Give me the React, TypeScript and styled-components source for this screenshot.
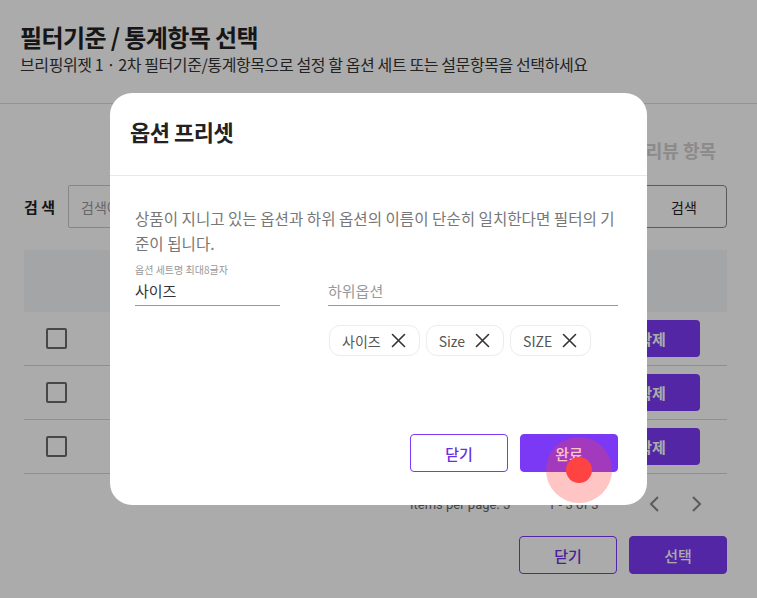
import React from 'react';
import styled, { createGlobalStyle } from 'styled-components';

const purple = '#7b39f5';

const GlobalStyle = createGlobalStyle`
    html, body {
        margin: 0;
        padding: 0;
        background: #ffffff;
    }
    body {
        font-family: 'Noto Sans CJK KR', 'Noto Sans', sans-serif;
        color: #222;
    }
    * {
        box-sizing: border-box;
    }
`;

const Page = styled.div`
    position: relative;
    width: 757px;
    height: 598px;
    overflow: hidden;
    background: #ffffff;
`;

const Header = styled.div`
    padding: 22px 20px 27px;
    border-bottom: 1px solid #dcdcdc;
`;

const Title = styled.h1`
    margin: 0;
    font-size: 24px;
    line-height: 30px;
    font-weight: 700;
    letter-spacing: -0.6px;
    color: #222;
`;

const SubTitle = styled.p`
    margin: 0;
    font-size: 16px;
    line-height: 24px;
    letter-spacing: -0.4px;
    color: #333;
`;

const Tabs = styled.div`
    display: flex;
    justify-content: flex-end;
    gap: 24px;
    padding: 34px 41px 0 24px;
`;

const Tab = styled.span<{ $active?: boolean }>`
    font-size: 18px;
    line-height: 24px;
    font-weight: 700;
    color: ${({ $active }) => ($active ? purple : '#cfcfcf')};
`;

const SearchRow = styled.div`
    display: flex;
    align-items: center;
    margin: 23px 30px 0 24px;
    height: 43px;
`;

const SearchLabel = styled.span`
    width: 44px;
    font-size: 15px;
    font-weight: 700;
    color: #222;
`;

const SearchInput = styled.div`
    flex: 1;
    height: 43px;
    display: flex;
    align-items: center;
    padding: 0 12px;
    border: 1px solid #c8c8c8;
    border-radius: 2px;
    font-size: 14px;
    color: #999;
`;

const SearchButton = styled.button`
    width: 86px;
    height: 43px;
    margin-left: 8px;
    border: 1px solid #888;
    border-radius: 4px;
    background: #fff;
    font-family: inherit;
    font-size: 14px;
    color: #222;
`;

const Table = styled.div`
    margin: 22px 30px 0 24px;
`;

const TableHead = styled.div`
    height: 62px;
    background: #f3f6f8;
`;

const Row = styled.div`
    height: 54px;
    display: flex;
    align-items: center;
    justify-content: space-between;
    padding: 0 27px 0 22px;
    border-bottom: 1px solid #d6d6d6;
`;

const CheckBox = styled.span`
    width: 21px;
    height: 21px;
    border: 2px solid #6a6a6a;
    border-radius: 2px;
`;

const DeleteButton = styled.button`
    width: 96px;
    height: 37px;
    border: none;
    border-radius: 4px;
    background: ${purple};
    color: #fff;
    font-family: inherit;
    font-size: 15px;
    font-weight: 700;
`;

const Pagination = styled.div`
    height: 60px;
    display: flex;
    align-items: center;
    padding-left: 410px;
    font-family: Roboto, 'Noto Sans', sans-serif;
    font-size: 13px;
    color: #666;
`;

const PageInfo = styled.span<{ $gap: number }>`
    margin-right: ${({ $gap }) => $gap}px;
`;

const Chevron = styled.span`
    display: flex;
    width: 20px;
    justify-content: center;
    margin-right: 23px;
    color: #888;
`;

const Footer = styled.div`
    display: flex;
    justify-content: flex-end;
    gap: 12px;
    padding: 2px 30px 0 0;
`;

const ActionButton = styled.button<{ $filled?: boolean }>`
    width: 98px;
    height: 38px;
    border-radius: 4px;
    border: 1px solid ${purple};
    background: ${({ $filled }) => ($filled ? purple : '#fff')};
    color: ${({ $filled }) => ($filled ? '#fff' : '#6a30e0')};
    font-family: inherit;
    font-size: 15px;
    font-weight: 500;
`;

const Overlay = styled.div`
    position: absolute;
    inset: 0;
    background: rgba(0, 0, 0, 0.33);
    display: flex;
    align-items: center;
    justify-content: center;
`;

const Modal = styled.div`
    width: 537px;
    height: 412px;
    display: flex;
    flex-direction: column;
    background: #fff;
    border-radius: 22px;
    overflow: hidden;
`;

const ModalHeader = styled.div`
    height: 83px;
    padding: 23px 20px 0;
    border-bottom: 1px solid #e8e8e8;
`;

const ModalTitle = styled.h2`
    margin: 0;
    font-size: 22px;
    line-height: 30px;
    font-weight: 700;
    letter-spacing: -0.5px;
    color: #222;
`;

const ModalBody = styled.div`
    flex: 1;
    padding: 30px 29px 0 25px;
`;

const Description = styled.p`
    margin: 0;
    font-size: 15.6px;
    line-height: 25px;
    word-break: break-all;
    color: #777;
`;

const Fields = styled.div`
    display: grid;
    grid-template-columns: 145px 290px;
    column-gap: 48px;
    margin-top: 7px;
`;

const FieldLabel = styled.div`
    height: 14px;
    font-size: 10px;
    line-height: 14px;
    color: #999;
`;

const FieldInput = styled.div<{ $placeholder?: boolean }>`
    padding: 3px 0 3px;
    line-height: 22px;
    font-size: 15px;
    border-bottom: 1px solid #999;
    color: ${({ $placeholder }) => ($placeholder ? '#999' : '#333')};
`;

const Chips = styled.div`
    display: flex;
    gap: 6px;
    margin-top: 19px;
    padding-left: 1px;
`;

const Chip = styled.span`
    display: inline-flex;
    align-items: center;
    gap: 10px;
    height: 31px;
    padding: 0 13px 0 12px;
    border: 1px solid #ececec;
    border-radius: 11px;
    font-size: 14px;
    color: #555;
`;

const ModalFooter = styled.div`
    display: flex;
    justify-content: flex-end;
    gap: 12px;
    padding: 0 29px 33px 0;
`;

const TouchHalo = styled.span`
    position: absolute;
    left: 546px;
    top: 437px;
    width: 66px;
    height: 66px;
    border-radius: 50%;
    background: rgba(255, 60, 60, 0.3);
    display: flex;
    align-items: center;
    justify-content: center;
`;

const TouchDot = styled.span`
    width: 26px;
    height: 26px;
    border-radius: 50%;
    background: #ff4242;
`;

const CloseIcon = () => (
    <svg width="15" height="15" viewBox="0 0 15 15" fill="none" stroke="#333" strokeWidth="1.6" strokeLinecap="round">
        <path d="M1.5 1.5 L13.5 13.5 M13.5 1.5 L1.5 13.5" />
    </svg>
);

const ChevronIcon = ({ dir }: { dir: 'left' | 'right' }) => (
    <svg width="12" height="18" viewBox="0 0 12 18" fill="none" stroke="currentColor" strokeWidth="2">
        <path d={dir === 'left' ? 'M10 2 L3 9 L10 16' : 'M2 2 L9 9 L2 16'} />
    </svg>
);

const chips = ['사이즈', 'Size', 'SIZE'];

export default function App() {
    return (
        <Page>
            <GlobalStyle />
            <Header>
                <Title>필터기준 / 통계항목 선택</Title>
                <SubTitle>브리핑위젯 1 · 2차 필터기준/통계항목으로 설정 할 옵션 세트 또는 설문항목을 선택하세요</SubTitle>
            </Header>
            <Tabs>
                <Tab $active>옵션 세트</Tab>
                <Tab>리뷰 항목</Tab>
            </Tabs>
            <SearchRow>
                <SearchLabel>검 색</SearchLabel>
                <SearchInput>검색어를 입력하세요</SearchInput>
                <SearchButton>검색</SearchButton>
            </SearchRow>
            <Table>
                <TableHead />
                {[0, 1, 2].map((i) => (
                    <Row key={i}>
                        <CheckBox />
                        <DeleteButton>삭제</DeleteButton>
                    </Row>
                ))}
            </Table>
            <Pagination>
                <PageInfo $gap={38}>Items per page: 5</PageInfo>
                <PageInfo $gap={46}>1 - 3 of 3</PageInfo>
                <Chevron>
                    <ChevronIcon dir="left" />
                </Chevron>
                <Chevron>
                    <ChevronIcon dir="right" />
                </Chevron>
            </Pagination>
            <Footer>
                <ActionButton>닫기</ActionButton>
                <ActionButton $filled>선택</ActionButton>
            </Footer>

            <Overlay>
                <Modal>
                    <ModalHeader>
                        <ModalTitle>옵션 프리셋</ModalTitle>
                    </ModalHeader>
                    <ModalBody>
                        <Description>
                            상품이 지니고 있는 옵션과 하위 옵션의 이름이 단순히 일치한다면 필터의 기준이 됩니다.
                        </Description>
                        <Fields>
                            <div>
                                <FieldLabel>옵션 세트명 최대8글자</FieldLabel>
                                <FieldInput>사이즈</FieldInput>
                            </div>
                            <div>
                                <FieldLabel />
                                <FieldInput $placeholder>하위옵션</FieldInput>
                                <Chips>
                                    {chips.map((c) => (
                                        <Chip key={c}>
                                            {c}
                                            <CloseIcon />
                                        </Chip>
                                    ))}
                                </Chips>
                            </div>
                        </Fields>
                    </ModalBody>
                    <ModalFooter>
                        <ActionButton>닫기</ActionButton>
                        <ActionButton $filled>완료</ActionButton>
                    </ModalFooter>
                </Modal>
            </Overlay>
            <TouchHalo>
                <TouchDot />
            </TouchHalo>
        </Page>
    );
}
